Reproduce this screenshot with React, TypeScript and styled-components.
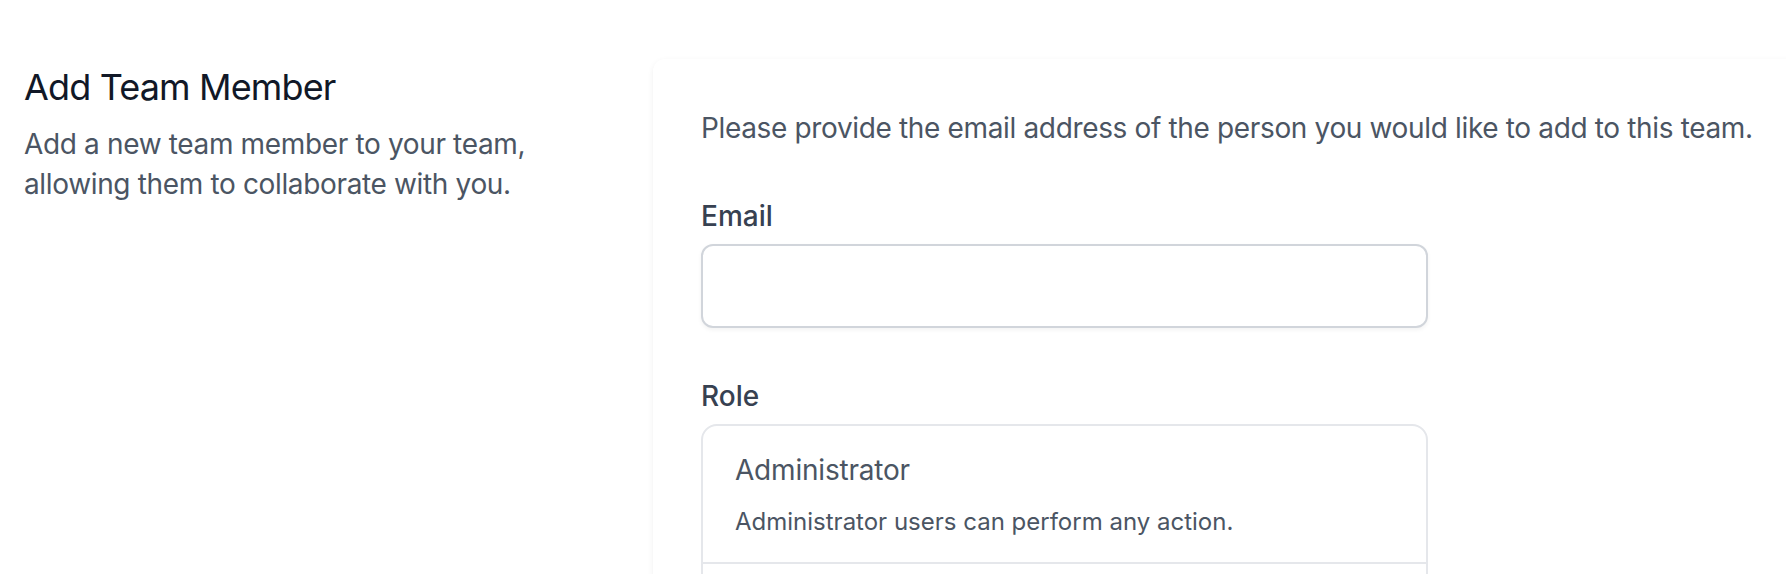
import styled, { createGlobalStyle } from "styled-components";

const GlobalStyle = createGlobalStyle`
  html, body {
    margin: 0;
    padding: 0;
    background: #ffffff;
    overflow: hidden;
  }

  body {
    font-family: Inter, "Noto Sans", "Liberation Sans", sans-serif;
    -webkit-font-smoothing: antialiased;
  }

  * {
    box-sizing: border-box;
  }
`;

const Section = styled.div`
  display: grid;
  grid-template-columns: 581px 1210px;
  column-gap: 48px;
  padding: 59px 0 0 24px;
  width: max-content;
`;

const Aside = styled.div`
  display: flex;
  flex-direction: column;
`;

const Heading = styled.h3`
  margin: 0;
  color: #111827;
  font-size: 36px;
  font-weight: 400;
  line-height: 57px;
  letter-spacing: -0.85px;
`;

const Muted = styled.p<{ $mt?: number }>`
  margin: ${(props) => props.$mt ?? 0}px 0 0;
  color: #4b5563;
  font-size: 28px;
  line-height: 40px;
  letter-spacing: -0.35px;
`;

const Card = styled.div`
  background: #ffffff;
  border-radius: 12px 12px 0 0;
  box-shadow: 0 2px 6px 0 rgba(0, 0, 0, 0.06), 0 2px 4px -2px rgba(0, 0, 0, 0.06);
  padding: 49px 48px 48px;
  min-height: 700px;
`;

const FormGrid = styled.div`
  display: grid;
  grid-template-columns: repeat(6, 1fr);
  gap: 48px;
`;

const Field = styled.div<{ $span: number }>`
  grid-column: span ${(props) => props.$span};
`;

const Label = styled.label`
  display: block;
  color: #374151;
  font-size: 28px;
  font-weight: 500;
  line-height: 40px;
`;

const Input = styled.input`
  display: block;
  width: 100%;
  height: 84px;
  margin-top: 8px;
  padding: 16px 24px;
  border: 2px solid #d1d5db;
  border-radius: 12px;
  box-shadow: 0 2px 4px 0 rgba(0, 0, 0, 0.05);
  font-family: inherit;
  font-size: 32px;
  outline: none;
`;

const RoleList = styled.div`
  margin-top: 8px;
  border: 2px solid #e5e7eb;
  border-radius: 16px;
  overflow: hidden;
`;

const RoleButton = styled.button<{ $first: boolean }>`
  display: flex;
  flex-direction: column;
  align-items: flex-start;
  width: 100%;
  padding: 24px 32px;
  background: transparent;
  border: 0;
  border-top: ${(props) => (props.$first ? "0" : "2px solid #e5e7eb")};
  font-family: inherit;
  text-align: left;
  cursor: pointer;
`;

const RoleName = styled.div`
  color: #4b5563;
  font-size: 28px;
  line-height: 40px;
  letter-spacing: -0.2px;
`;

const RoleDescription = styled.div`
  margin-top: 16px;
  color: #4b5563;
  font-size: 24px;
  line-height: 32px;
`;

const roles = [
  {
    key: "admin",
    name: "Administrator",
    description: "Administrator users can perform any action.",
  },
  {
    key: "editor",
    name: "Editor",
    description: "Editor users have the ability to read, create, and update.",
  },
];

export default function App() {
  return (
    <>
      <GlobalStyle />
      <Section>
        <Aside>
          <Heading>Add Team Member</Heading>
          <Muted $mt={8}>
            Add a new team member to your team,
            <br />
            allowing them to collaborate with you.
          </Muted>
        </Aside>
        <Card>
          <FormGrid>
            <Field $span={6}>
              <Muted>
                Please provide the email address of the person you would like
                to add to this team.
              </Muted>
            </Field>
            <Field $span={4}>
              <Label htmlFor="email">Email</Label>
              <Input id="email" type="email" />
            </Field>
            <Field $span={4}>
              <Label>Role</Label>
              <RoleList>
                {roles.map((role, i) => (
                  <RoleButton key={role.key} type="button" $first={i === 0}>
                    <RoleName>{role.name}</RoleName>
                    <RoleDescription>{role.description}</RoleDescription>
                  </RoleButton>
                ))}
              </RoleList>
            </Field>
          </FormGrid>
        </Card>
      </Section>
    </>
  );
}
